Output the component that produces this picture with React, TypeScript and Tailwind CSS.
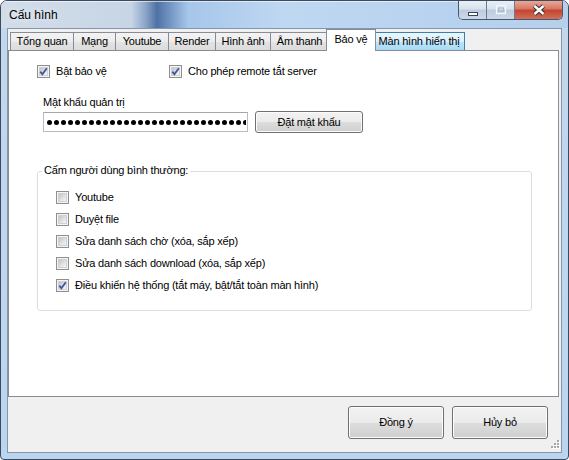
import type { ReactNode } from "react";

const tabs: { label: string; width: number; state?: "selected" | "hover" }[] = [
  { label: "Tổng quan", width: 64 },
  { label: "Mạng", width: 43 },
  { label: "Youtube", width: 54 },
  { label: "Render", width: 48 },
  { label: "Hình ảnh", width: 56 },
  { label: "Âm thanh", width: 59 },
  { label: "Bảo vệ", width: 50, state: "selected" },
  { label: "Màn hình hiển thị", width: 92, state: "hover" },
];

const blocked = [
  { label: "Youtube", checked: false },
  { label: "Duyệt file", checked: false },
  { label: "Sửa danh sách chờ (xóa, sắp xếp)", checked: false },
  { label: "Sửa danh sách download (xóa, sắp xếp)", checked: false },
  { label: "Điều khiển hệ thống (tắt máy, bật/tắt toàn màn hình)", checked: true },
];

function CheckBox({ checked }: { checked?: boolean }) {
  return (
    <span className="relative block w-[13px] h-[13px] shrink-0 border border-[#8e8f8f] bg-[#f4f4f4]">
      <span className="absolute inset-[1px] border border-[#cfd1d5] bg-[linear-gradient(135deg,#bfc3c8,#e0e1e3_55%,#f6f6f6)]" />
      {checked && (
        <svg className="absolute -inset-[1px]" width="13" height="13" viewBox="0 0 13 13">
          <path d="M3.3 6.6 L5.4 9.3 L9.8 3.2" fill="none" stroke="#3e569b" strokeWidth="1.8" />
        </svg>
      )}
    </span>
  );
}

function Option({ checked, children }: { checked?: boolean; children: ReactNode }) {
  return (
    <label className="flex items-center gap-[6px] h-[13px]">
      <CheckBox checked={checked} />
      <span>{children}</span>
    </label>
  );
}

function Button({ children, className }: { children: ReactNode; className: string }) {
  return (
    <button
      className={`flex items-center justify-center rounded-[3px] border border-[#707070] bg-[linear-gradient(#f2f2f2,#ebebeb_50%,#dddddd_50%,#cfcfcf)] shadow-[inset_0_0_0_1px_#fcfcfc] ${className}`}
    >
      {children}
    </button>
  );
}

export default function App() {
  return (
    <div className="w-[569px] h-[460px] bg-white font-['Liberation_Sans',Arial,sans-serif] text-black">
      <div className="w-[569px] h-[460px] flex flex-col rounded-t-[7px] rounded-b-[4px] border border-[#3b4a5e] bg-[linear-gradient(#c4d7ec,#bcd5ef)] overflow-hidden">
        {/* title bar */}
        <div className="h-[27px] shrink-0 flex items-start bg-[linear-gradient(90deg,#d2dde9_0%,#c7d5e5_23%,#8aa5c8_25.5%,#4f72a4_27.5%,#6d90c0_29.5%,#a6c6ea_33%,#bfd8f2_50%,#b7d2ef_80%,#b6d0ec_100%)] shadow-[inset_0_1px_0_rgba(255,255,255,0.6)]">
          <span className="pl-[8px] pt-[7px] text-[12px] leading-[14px] [text-shadow:0_0_6px_rgba(255,255,255,0.95)]">
            Cấu hình
          </span>
          <div className="ml-auto mr-[5px] flex h-[19px] rounded-b-[5px] border border-t-0 border-[#4a586b] overflow-hidden">
            <div className="w-[28px] flex items-center justify-center border-r border-[#6d7b8d] bg-[linear-gradient(#e9eff6,#d7e2ee_45%,#bccbdd_50%,#cbd8e8)]">
              <svg width="12" height="19" viewBox="0 0 12 19">
                <rect x="1.5" y="11.5" width="9" height="3" fill="#fff" stroke="#3a4656" />
              </svg>
            </div>
            <div className="w-[28px] flex items-center justify-center border-r border-[#6d7b8d] bg-[linear-gradient(#e9eff6,#d7e2ee_45%,#bccbdd_50%,#cbd8e8)]">
              <svg width="12" height="19" viewBox="0 0 12 19">
                <rect x="1.5" y="4.5" width="9" height="8" fill="none" stroke="#f4f7fb" strokeWidth="1.3" />
                <rect x="3.5" y="7" width="5" height="3" fill="none" stroke="#a8b8cc" />
              </svg>
            </div>
            <div className="w-[47px] flex items-center justify-center bg-[linear-gradient(#e9a898,#d87562_45%,#c4432f_50%,#d0705a)]">
              <svg width="16" height="19" viewBox="0 0 16 19">
                <path d="M3.5 5 L12.5 13 M12.5 5 L3.5 13" stroke="#34302f" strokeWidth="4.4" />
                <path d="M3.5 5 L12.5 13 M12.5 5 L3.5 13" stroke="#ffffff" strokeWidth="2.4" />
              </svg>
            </div>
          </div>
        </div>

        {/* client area */}
        <div className="flex-1 flex px-[6px] pb-[6px]">
          <div className="relative flex-1 flex flex-col border border-[#8396ae] bg-[#f0f0f0] text-[11px] leading-[13px] tracking-[-0.2px]">
            {/* tab strip */}
            <div className="h-[21px] shrink-0 flex items-end pl-[2px]">
              {tabs.map((t, i) => {
                const base = "flex items-center justify-center whitespace-nowrap border border-b-0";
                if (t.state === "selected") {
                  return (
                    <div
                      key={t.label}
                      style={{ width: t.width }}
                      className={`${base} relative z-10 h-[22px] -mb-[1px] ml-[-3px] mr-[-2px] pb-[2px] bg-white border-[#898c95]`}
                    >
                      {t.label}
                    </div>
                  );
                }
                return (
                  <div
                    key={t.label}
                    style={{ width: t.width }}
                    className={`${base} h-[18px] ${i > 0 ? "ml-[-1px]" : ""} ${
                      t.state === "hover"
                        ? "border-[#3c7fb1] bg-[linear-gradient(#eaf6fd,#d9f0fc_50%,#bee6fd_50%,#a7d9f5)]"
                        : "border-[#898c95] bg-[linear-gradient(#f3f3f3,#ececec_50%,#e3e3e3_50%,#dcdcdc)]"
                    }`}
                  >
                    {t.label}
                  </div>
                );
              })}
            </div>

            {/* tab page */}
            <div className="w-[551px] h-[347px] shrink-0 border border-[#898c95] bg-white pl-[28px] pt-[14px]">
              <div className="flex">
                <div className="w-[132px]">
                  <Option checked>Bật bảo vệ</Option>
                </div>
                <Option checked>Cho phép remote tắt server</Option>
              </div>

              <div className="ml-[6px] mt-[18px]">Mật khẩu quản trị</div>

              <div className="ml-[6px] mt-[2px] flex items-center h-[22px]">
                <div className="w-[205px] h-[20px] flex items-center border border-[#b8bbc3] border-t-[#a3a6ae] bg-white pl-[3px] overflow-hidden">
                  <div className="flex gap-[2px] overflow-hidden w-[199px]">
                    {Array.from({ length: 30 }).map((_, i) => (
                      <span key={i} className="block w-[5px] h-[5px] rounded-full bg-black shrink-0" />
                    ))}
                  </div>
                </div>
                <Button className="ml-[7px] w-[108px] h-[22px]">Đặt mật khẩu</Button>
              </div>

              <div className="relative mt-[38px] w-[495px] h-[140px] rounded-[3px] border border-[#d5dfe5] pl-[18px] pt-[19px]">
                <span className="absolute left-[4px] -top-[8px] bg-white px-[2px]">
                  Cấm người dùng bình thường:
                </span>
                <div className="flex flex-col gap-[9px]">
                  {blocked.map((b) => (
                    <Option key={b.label} checked={b.checked}>
                      {b.label}
                    </Option>
                  ))}
                </div>
              </div>
            </div>

            {/* dialog buttons */}
            <div className="flex-1 flex justify-end items-start gap-[8px] pt-[9px] pr-[13px]">
              <Button className="w-[96px] h-[33px]">Đồng ý</Button>
              <Button className="w-[96px] h-[33px]">Hủy bỏ</Button>
            </div>

            {/* size grip */}
            <svg className="absolute right-[1px] bottom-[1px]" width="11" height="11" viewBox="0 0 11 11">
              {[
                [8, 0],
                [5, 3],
                [8, 3],
                [2, 6],
                [5, 6],
                [8, 6],
              ].map(([x, y]) => (
                <g key={`${x}-${y}`}>
                  <rect x={x + 1} y={y + 1} width="2" height="2" fill="#ffffff" />
                  <rect x={x} y={y} width="2" height="2" fill="#a8a8a8" />
                </g>
              ))}
            </svg>
          </div>
        </div>
      </div>
    </div>
  );
}
